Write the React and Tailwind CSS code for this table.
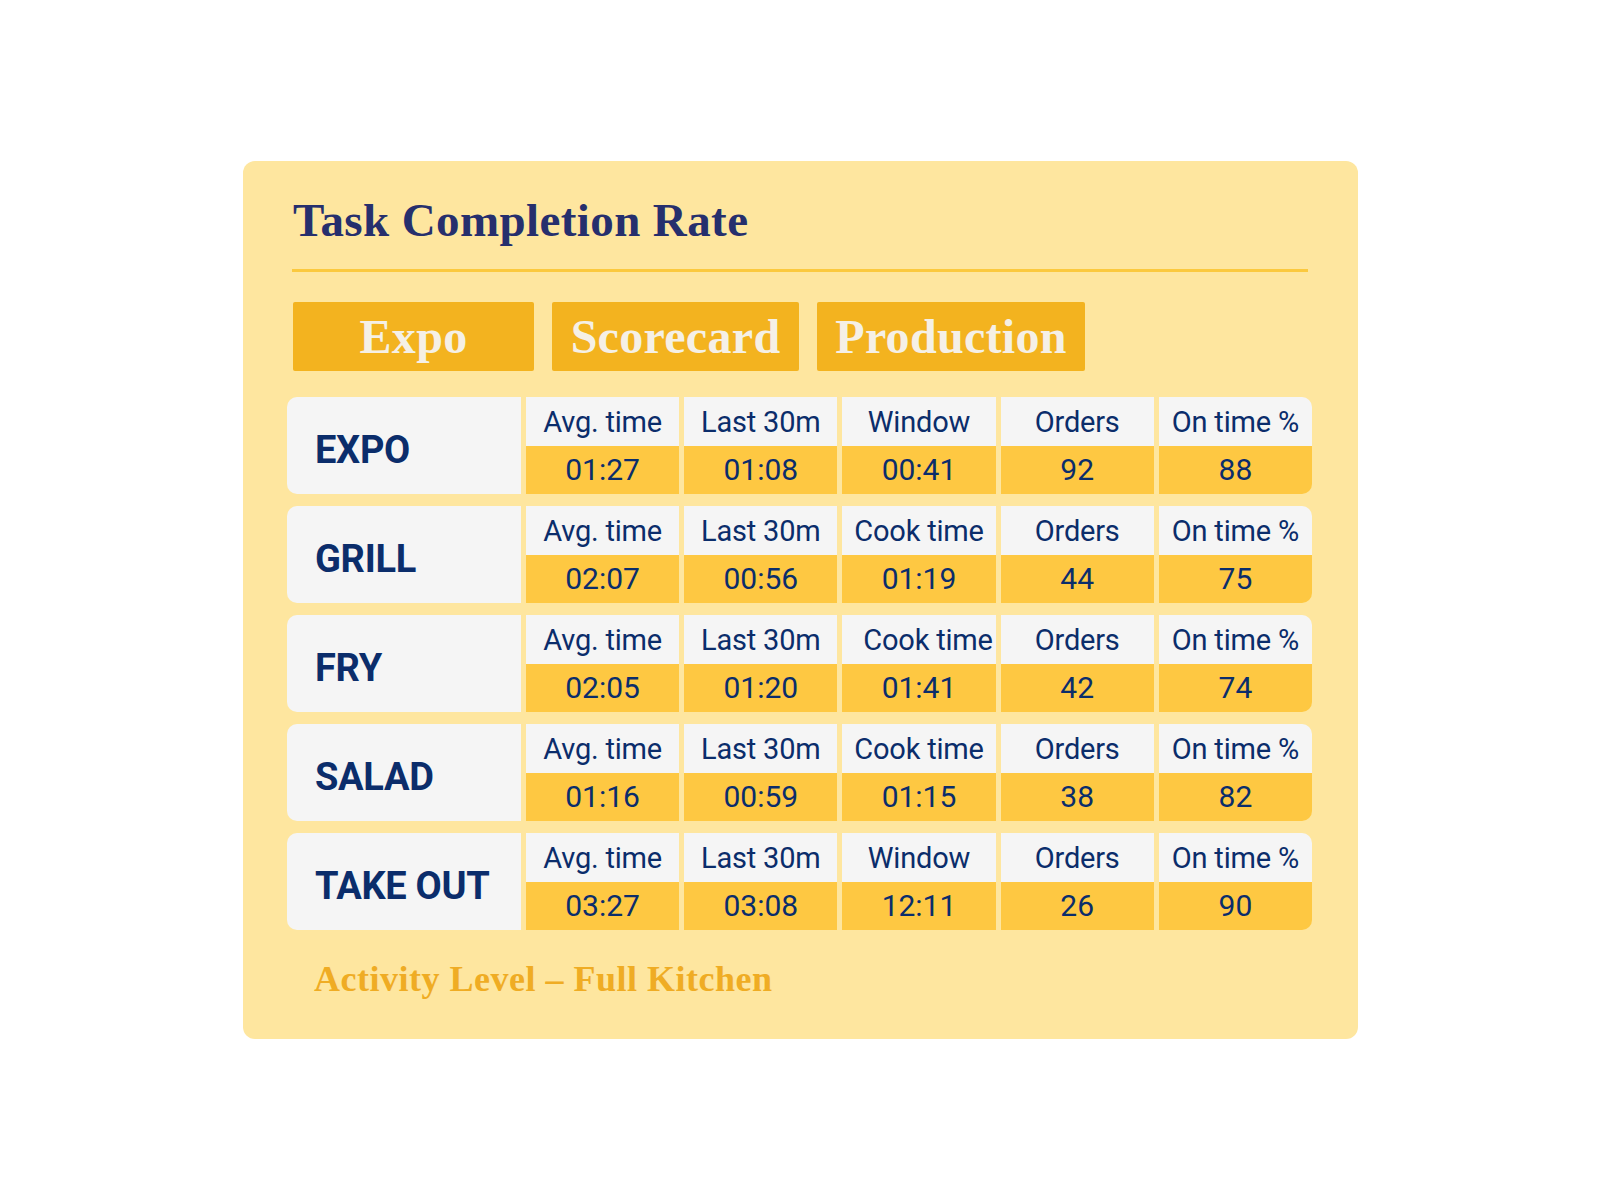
import React from "react";

const rows = [
    { name: "EXPO", third: "Window", values: ["01:27", "01:08", "00:41", "92", "88"] },
    { name: "GRILL", third: "Cook time", values: ["02:07", "00:56", "01:19", "44", "75"] },
    { name: "FRY", third: "Cook time", values: ["02:05", "01:20", "01:41", "42", "74"], nudge: true },
    { name: "SALAD", third: "Cook time", values: ["01:16", "00:59", "01:15", "38", "82"] },
    { name: "TAKE OUT", third: "Window", values: ["03:27", "03:08", "12:11", "26", "90"] },
];

const serif = "font-['Liberation_Serif',serif]";
const sans = "font-['Roboto',sans-serif]";

function StationRow({ row }) {
    const headers = ["Avg. time", "Last 30m", row.third, "Orders", "On time %"];
    return (
        <div className="grid h-[97px] w-[1025px] grid-cols-[234px_repeat(5,minmax(0,1fr))] gap-x-[5px]">
            <div className="flex items-center rounded-l-[10px] bg-[#f5f5f5] pl-[28px] pt-[8px]">
                <span className={`${sans} text-[38px] font-bold leading-none tracking-[-0.3px] text-[#0b2d6b]`}>{row.name}</span>
            </div>
            {headers.map((h, i) => (
                <div key={h + i} className={`flex flex-col overflow-hidden ${i === 4 ? "rounded-r-[10px]" : ""}`}>
                    <div
                        className={`flex h-[49px] items-center justify-center whitespace-nowrap bg-[#f5f5f5] pt-[2px] ${sans} text-[29px] leading-none tracking-[-0.2px] text-[#0b2d6b] ${row.nudge && i === 2 ? "pl-[18px]" : ""}`}
                    >
                        {h}
                    </div>
                    <div className={`flex flex-1 items-center justify-center bg-[#fec842] ${sans} text-[30px] leading-none text-[#0b2d6b]`}>
                        {row.values[i]}
                    </div>
                </div>
            ))}
        </div>
    );
}

export default function App() {
    const tabs = [
        { label: "Expo", w: "w-[241px]" },
        { label: "Scorecard", w: "w-[247px]" },
        { label: "Production", w: "w-[268px]" },
    ];

    return (
        <div className="flex min-h-[1200px] items-center justify-center bg-white">
            <div className="flex h-[878px] w-[1115px] flex-col rounded-[12px] bg-[#fee69f] pl-[44px] pt-[36px]">
                <h1 className={`${serif} ml-[6px] text-[47px] font-bold leading-none tracking-[0.4px] text-[#262f6d]`}>Task Completion Rate</h1>
                <div className="ml-[5px] mt-[25px] h-[3px] w-[1016px] bg-[#fbc93e]" />

                <div className="ml-[6px] mt-[30px] flex gap-[18px]">
                    {tabs.map((t) => (
                        <div key={t.label} className={`flex h-[69px] items-center justify-center rounded-[2px] bg-[#f3b31f] ${t.w}`}>
                            <span className={`${serif} text-[48px] font-bold leading-none tracking-[0.3px] text-[#f5f0e6]`}>{t.label}</span>
                        </div>
                    ))}
                </div>

                <div className="mt-[26px] flex flex-col gap-[12px]">
                    {rows.map((r) => (
                        <StationRow key={r.name} row={r} />
                    ))}
                </div>

                <p className={`${serif} ml-[27px] mt-[31px] text-[36px] font-bold leading-none tracking-[0.5px] text-[#efac24]`}>
                    Activity Level – Full Kitchen
                </p>
            </div>
        </div>
    );
}
